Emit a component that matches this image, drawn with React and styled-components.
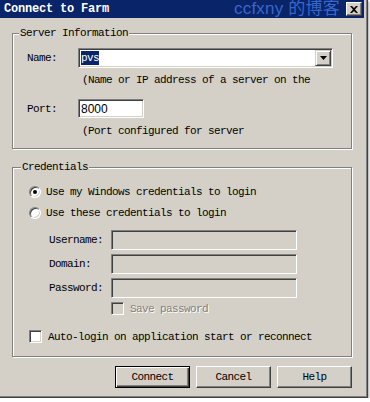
import React from "react";
import styled, { createGlobalStyle } from "styled-components";

const GlobalStyle = createGlobalStyle`
  html, body {
    margin: 0;
    padding: 0;
    background: #fff;
  }
  body {
    font-family: "Liberation Mono", "DejaVu Sans Mono", monospace;
    font-size: 11px;
    letter-spacing: -0.6px;
    line-height: 12px;
    color: #000;
  }
`;

const Window = styled.div`
  position: relative;
  box-sizing: border-box;
  width: 368px;
  height: 398px;
  padding-right: 3px;
  background: #d4d0c8;
  border-right: 1px solid #404040;
  border-bottom: 1px solid #404040;
  box-shadow: inset -1px -1px 0 #808080, 1px 1px 2px rgba(0, 0, 0, 0.35);
`;

const TitleBar = styled.div`
  position: relative;
  display: flex;
  align-items: center;
  height: 18px;
  padding: 0 2px 0 4px;
  background: #0a246a;
`;

const Title = styled.span`
  color: #fff;
  font-weight: bold;
  font-size: 12px;
  letter-spacing: -0.2px;
`;

const Watermark = styled.span`
  position: absolute;
  left: 234px;
  top: 0;
  font-family: "Liberation Sans", "Noto Sans CJK SC", sans-serif;
  font-size: 17px;
  line-height: 18px;
  letter-spacing: 0.2px;
  white-space: nowrap;
  color: #3d6fd6;
  opacity: 0.9;
`;

const CloseButton = styled.div`
  position: relative;
  z-index: 1;
  margin-left: auto;
  box-sizing: border-box;
  width: 16px;
  height: 14px;
  display: flex;
  align-items: center;
  justify-content: center;
  background: #d4d0c8;
  border: 1px solid;
  border-color: #fff #404040 #404040 #fff;
  box-shadow: inset -1px -1px 0 #808080;
`;

const Body = styled.div`
  padding: 15px 0 0 12px;
`;

const GroupBox = styled.div`
  position: relative;
  box-sizing: border-box;
  width: 340px;
  margin-top: ${(p) => p.$top || 0}px;
  padding: ${(p) => p.$pad};
  border: 1px solid #808080;
  box-shadow: inset 1px 1px 0 #fff, 1px 1px 0 #fff;
`;

const Caption = styled.span`
  position: absolute;
  top: -7px;
  left: ${(p) => p.$left}px;
  padding: 0 1px;
  background: #d4d0c8;
`;

const FormRow = styled.div`
  display: grid;
  grid-template-columns: ${(p) => p.$label}px auto;
  align-items: center;
  margin-top: ${(p) => p.$top || 0}px;
`;

const Hint = styled.div`
  margin: ${(p) => p.$top}px 0 0 55px;
  height: 12px;
  white-space: nowrap;
`;

const Field = styled.div`
  position: relative;
  box-sizing: border-box;
  display: flex;
  align-items: center;
  width: ${(p) => p.$w}px;
  height: ${(p) => p.$h || 20}px;
  padding: 0 1px;
  background: ${(p) => (p.$disabled ? "#d4d0c8" : "#fff")};
  border: 1px solid;
  border-color: #808080 #fff #fff #808080;
  box-shadow: inset 1px 1px 0 #404040, inset -1px -1px 0 #d4d0c8;
`;

const Selected = styled.span`
  background: #0a246a;
  color: #fff;
  line-height: 14px;
  margin-left: 1px;
`;

const SansValue = styled.span`
  font-family: "Liberation Sans", Arial, sans-serif;
  font-size: 12px;
  letter-spacing: 0;
  margin-left: 1px;
`;

const DropButton = styled.div`
  box-sizing: border-box;
  margin-left: auto;
  width: 16px;
  height: 16px;
  display: flex;
  align-items: center;
  justify-content: center;
  background: #d4d0c8;
  border: 1px solid;
  border-color: #d4d0c8 #404040 #404040 #d4d0c8;
  box-shadow: inset 1px 1px 0 #fff, inset -1px -1px 0 #808080;
`;

const OptionRow = styled.div`
  display: flex;
  align-items: center;
  gap: ${(p) => p.$gap || 5}px;
  margin-top: ${(p) => p.$top || 0}px;
  margin-left: ${(p) => p.$indent || 0}px;
  height: ${(p) => p.$h || 12}px;
  white-space: nowrap;
  color: ${(p) => (p.$disabled ? "#808080" : "#000")};
  text-shadow: ${(p) => (p.$disabled ? "1px 1px 0 #fff" : "none")};
`;

const Radio = styled.span`
  position: relative;
  box-sizing: border-box;
  width: 12px;
  height: 12px;
  border-radius: 50%;
  background: #fff;
  border: 1px solid;
  border-color: #808080 #fff #fff #808080;
  box-shadow: inset 1px 1px 0 #404040, inset -1px -1px 0 #d4d0c8;
  &::after {
    content: "";
    display: ${(p) => (p.$checked ? "block" : "none")};
    position: absolute;
    left: 3px;
    top: 3px;
    width: 4px;
    height: 4px;
    border-radius: 50%;
    background: #000;
  }
`;

const Check = styled.span`
  box-sizing: border-box;
  width: 13px;
  height: 13px;
  background: ${(p) => (p.$disabled ? "#d4d0c8" : "#fff")};
  border: 1px solid;
  border-color: #808080 #fff #fff #808080;
  box-shadow: inset 1px 1px 0 #404040, inset -1px -1px 0 #d4d0c8;
`;

const CredFields = styled.div`
  display: flex;
  flex-direction: column;
  gap: 4px;
  margin: 11px 0 0 20px;
`;

const ButtonBar = styled.div`
  display: flex;
  justify-content: flex-end;
  gap: 6px;
  width: 340px;
  margin-top: 9px;
`;

const Button = styled.div`
  box-sizing: border-box;
  width: 75px;
  height: 22px;
  display: flex;
  align-items: center;
  justify-content: center;
  background: #d4d0c8;
  border: 1px solid;
  border-color: ${(p) => (p.$default ? "#000" : "#fff #404040 #404040 #fff")};
  box-shadow: ${(p) =>
    p.$default
      ? "inset 1px 1px 0 #fff, inset -1px -1px 0 #404040, inset -2px -2px 0 #808080"
      : "inset -1px -1px 0 #808080"};
`;

const CloseGlyph = () => (
  <svg width="8" height="7" viewBox="0 0 8 7">
    <path d="M0 0h2l2 2 2-2h2L5 3.5 8 7H6L4 5 2 7H0l3-3.5z" fill="#000" />
  </svg>
);

const Arrow = () => (
  <svg width="7" height="4" viewBox="0 0 7 4">
    <path d="M0 0h7L3.5 4z" fill="#000" />
  </svg>
);

export default function App() {
  return (
    <>
      <GlobalStyle />
      <Window>
        <TitleBar>
          <Title>Connect to Farm</Title>
          <Watermark>ccfxny 的博客</Watermark>
          <CloseButton>
            <CloseGlyph />
          </CloseButton>
        </TitleBar>
        <Body>
          <GroupBox $pad="14px 0 11px 14px">
            <Caption $left={6}>Server Information</Caption>
            <FormRow $label={51}>
              <span>Name:</span>
              <Field $w={255} $h={20}>
                <Selected>pvs</Selected>
                <DropButton>
                  <Arrow />
                </DropButton>
              </Field>
            </FormRow>
            <Hint $top={6}>(Name or IP address of a server on the</Hint>
            <FormRow $label={51} $top={13}>
              <span>Port:</span>
              <Field $w={66} $h={19}>
                <SansValue>8000</SansValue>
              </Field>
            </FormRow>
            <Hint $top={7}>(Port configured for server</Hint>
          </GroupBox>

          <GroupBox $top={18} $pad="18px 0 13px 16px">
            <Caption $left={8}>Credentials</Caption>
            <OptionRow>
              <Radio $checked />
              Use my Windows credentials to login
            </OptionRow>
            <OptionRow $top={9}>
              <Radio />
              Use these credentials to login
            </OptionRow>
            <CredFields>
              <FormRow $label={62}>
                <span>Username:</span>
                <Field $w={186} $disabled />
              </FormRow>
              <FormRow $label={62}>
                <span>Domain:</span>
                <Field $w={186} $disabled />
              </FormRow>
              <FormRow $label={62}>
                <span>Password:</span>
                <Field $w={186} $disabled />
              </FormRow>
              <OptionRow $h={13} $gap={6} $indent={62} $disabled>
                <Check $disabled />
                Save password
              </OptionRow>
            </CredFields>
            <OptionRow $h={13} $top={15} $gap={6}>
              <Check />
              Auto-login on application start or reconnect
            </OptionRow>
          </GroupBox>

          <ButtonBar>
            <Button $default>Connect</Button>
            <Button>Cancel</Button>
            <Button>Help</Button>
          </ButtonBar>
        </Body>
      </Window>
    </>
  );
}
